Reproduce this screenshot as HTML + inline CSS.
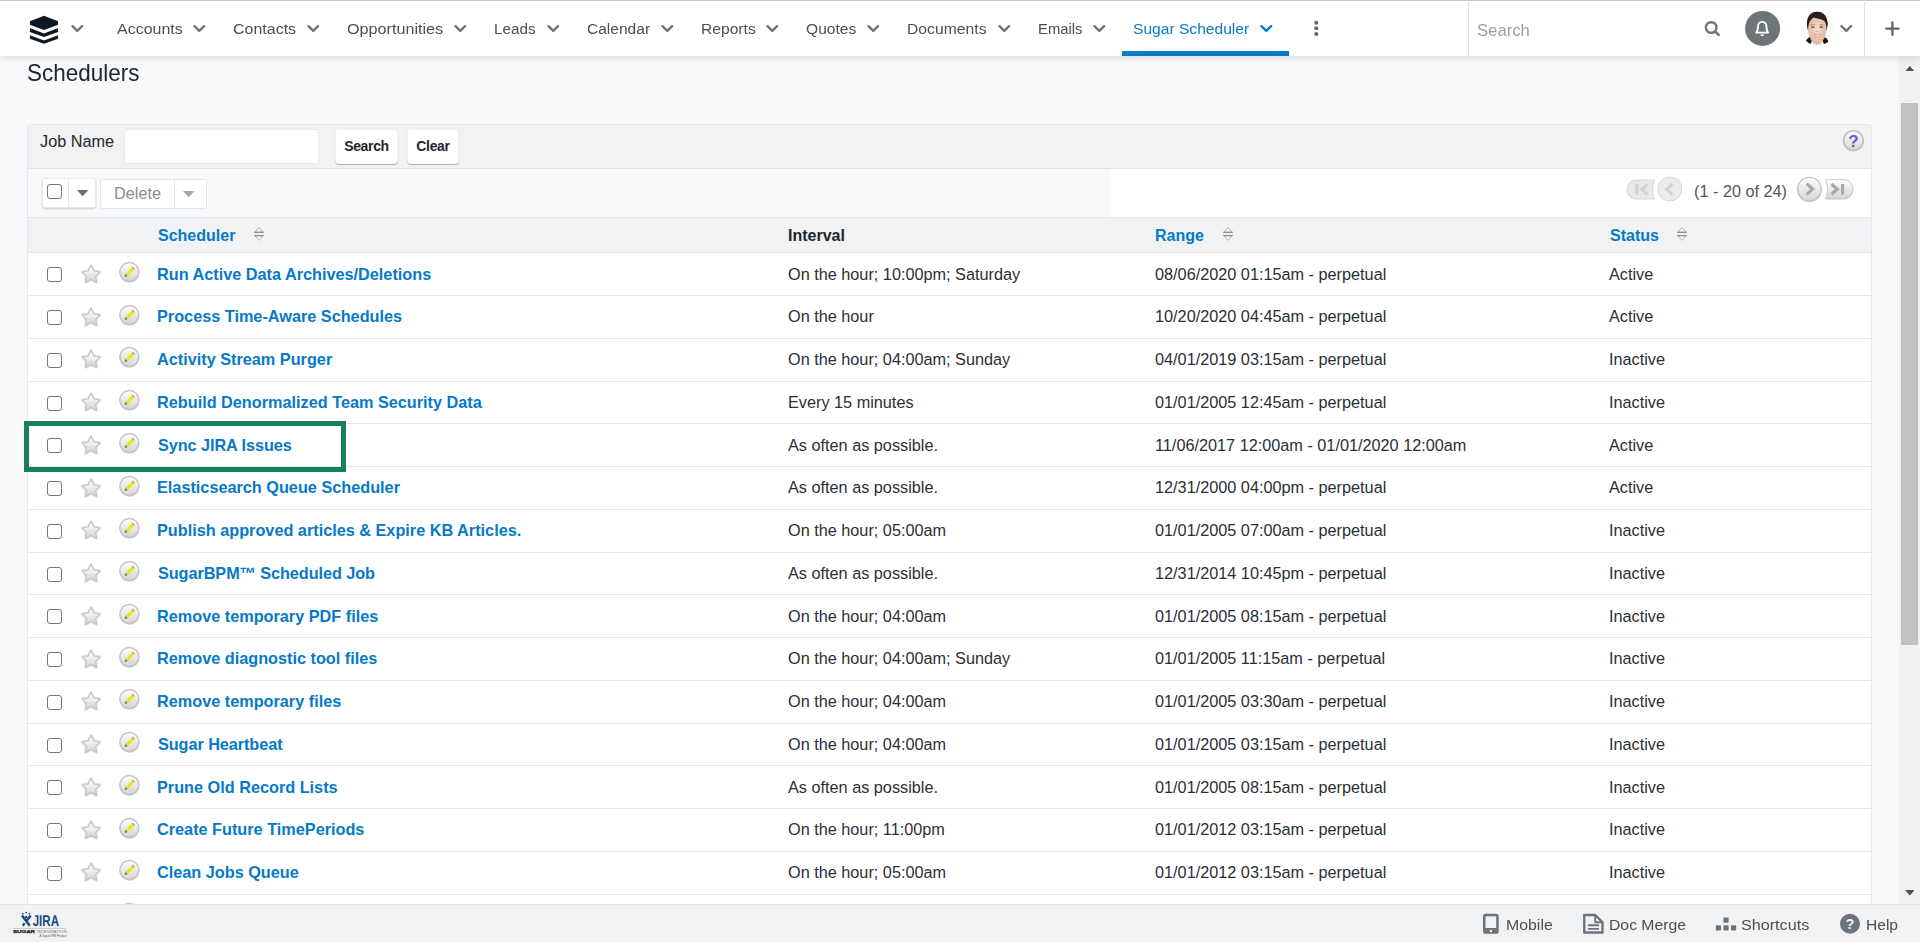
<!DOCTYPE html>
<html lang="en"><head><meta charset="utf-8"><title>Schedulers</title>
<style>
*{box-sizing:border-box}
html,body{margin:0;padding:0}
body{width:1920px;height:942px;overflow:hidden;position:relative;background:#f8f9fb;font-family:"Liberation Sans",sans-serif;color:#2b2f34;font-size:16.25px}
svg{display:block}
.abs{position:absolute}
/* ---- navbar ---- */
#nav{position:absolute;left:0;top:0;width:1920px;height:56px;background:#fff;box-shadow:0 2px 8px rgba(40,50,60,.16)}
#navtop{position:absolute;left:0;top:0;width:1920px;height:1px;background:#c8c8c8}
#nav .it{position:absolute;top:20px;font-size:15.5px;line-height:18px;color:#4a4f55;white-space:nowrap;transform-origin:0 50%}
#nav .chev{position:absolute;top:24.1px;width:14px;height:10px}
#nav .act{color:#0679c8}
#underline{position:absolute;left:1122px;top:51px;width:167px;height:5px;background:#0679c8}
/* ---- title ---- */
#title{position:absolute;left:27px;top:59px;font-size:24px;line-height:28px;color:#22262b;white-space:nowrap;transform:scaleX(.936);transform-origin:0 50%}
/* ---- panel ---- */
#panel{position:absolute;left:27px;top:124px;width:1845px;height:830px;background:#fff;border:1px solid #e4e8ec;border-radius:3px 3px 0 0}
#searchbar{position:absolute;left:28px;top:125px;width:1843px;height:43px;background:#f1f2f4}
#toolbar{position:absolute;left:28px;top:169px;width:1082.500px;height:48px;background:#f8f9fb}
.hline{position:absolute;left:28px;width:1843px;height:1px;background:#dfe5e9}
#thead{position:absolute;left:28px;top:218px;width:1843px;height:34px;background:#f1f2f4}
.th{position:absolute;top:226px;font-weight:bold;font-size:16px;line-height:19px;color:#0679c8;white-space:nowrap}
.sorter{position:absolute;top:227.400px;width:10px;height:14px}
/* rows */
.row{position:absolute;left:28px;width:1843px;border-bottom:0;background:#fff;box-shadow:0 1px 0 #e1e7eb}
.row span,.row a{position:absolute;top:12px;line-height:19px;white-space:nowrap;font-size:16.25px}
.row .cb{left:19px;top:14px;width:15px;height:15px;border:1.5px solid #767676;border-radius:3px;background:#fff}
.row .star{position:absolute;left:52px;top:10px;width:22px;height:22px}
.row .edit{position:absolute;left:89px;top:7px;width:24px;height:24px}
.row .nm{font-weight:bold;color:#0679c8}
.row .iv{left:760px}
.row .rg{left:1127px}
.row .st{left:1581px}
#hl{position:absolute;left:24px;top:421px;width:322px;height:51px;border:5px solid #177f5b}
/* footer */
#foot{position:absolute;left:0;top:904px;width:1920px;height:38px;background:#f1f2f4}
#footline{position:absolute;left:0;top:0;width:1920px;height:1px;background:#dfe5e9}
#foot .ft{position:absolute;top:12px;font-size:15.500px;line-height:18px;color:#4a4f55;white-space:nowrap;transform-origin:0 50%}
/* scrollbar */
#sb{position:absolute;left:1899px;top:56px;width:21px;height:848px;background:#f1f1f1}
#sbthumb{position:absolute;left:1901px;top:103px;width:17px;height:542px;background:#c1c1c1}

</style></head>
<body>
<svg width="0" height="0" style="position:absolute">
<defs>
<linearGradient id="g-star" x1="0" y1="0" x2="0" y2="1"><stop offset="0" stop-color="#ffffff"/><stop offset=".35" stop-color="#f4f4f4"/><stop offset="1" stop-color="#d0d0d0"/></linearGradient>
<linearGradient id="g-btn" x1="0" y1="0" x2="0" y2="1"><stop offset="0" stop-color="#ffffff"/><stop offset="1" stop-color="#d4d4d4"/></linearGradient>
<filter id="f-sh2" x="-20%" y="-20%" width="140%" height="150%"><feGaussianBlur stdDeviation="0.7"/></filter>
<filter id="f-sh" x="-20%" y="-20%" width="140%" height="150%"><feGaussianBlur stdDeviation="0.5"/></filter>
<g id="i-star">
<path d="M11.10 2.60L13.92 7.92L19.85 8.96L15.67 13.28L16.51 19.24L11.10 16.60L5.69 19.24L6.53 13.28L2.35 8.96L8.28 7.92Z" fill="#c9c9c9" stroke="#c6c6c6" stroke-width="3" stroke-linejoin="round" opacity=".5" filter="url(#f-sh2)"/>
<path d="M11.10 2.60L13.92 7.92L19.85 8.96L15.67 13.28L16.51 19.24L11.10 16.60L5.69 19.24L6.53 13.28L2.35 8.96L8.28 7.92Z" fill="url(#g-star)" stroke="#c2c2c2" stroke-width="1.100" stroke-linejoin="round"/>
</g>
<g id="i-edit">
<circle cx="12.400" cy="12.600" r="10.100" fill="#adadad" opacity=".7" filter="url(#f-sh2)"/>
<circle cx="12.400" cy="11.900" r="9.400" fill="url(#g-btn)" stroke="#c6c6c6" stroke-width="1.500"/>
<path transform="translate(12.500 12) scale(.88) translate(-12.500 -12)" d="M7.900 14.100l7.300-7.300 2.600 2.600-7.300 7.300z" fill="#ece81c"/>
<path transform="translate(12.500 12) scale(.88) translate(-12.500 -12)" d="M7.900 14.100l2.600 2.600-3.600 1z" fill="#77776a"/>
<path transform="translate(12.500 12) scale(.88) translate(-12.500 -12)" d="M15.200 6.800l.8-.8 2.600 2.600-.8.800z" fill="#8f8f74"/>
</g>
<g id="i-sort">
<path d="M5 .6L9.200 5.200H.8z" fill="#f5f5f5" stroke="#adadad" stroke-width="1" stroke-linejoin="round"/>
<path d="M5 13.400L9.200 8.700H.8z" fill="#f5f5f5" stroke="#b4b4b4" stroke-width="1" stroke-linejoin="round"/>
<path d="M.3 5.300H9.700M.3 8.600H9.700" stroke="#8e8e8e" stroke-width="1.300"/>
</g>
<path id="i-chev" d="M2.500 2.200L7.300 6.900L12.100 2.200" fill="none" stroke-width="2.400" stroke-linecap="round" stroke-linejoin="round"/>
</defs>
</svg>
<div id="title">Schedulers</div>
<div id="panel"></div>
<div id="searchbar"></div>
<div class="hline" style="top:168px"></div>
<div id="toolbar"></div>
<div class="hline" style="top:217px"></div>
<div id="thead"></div>
<div class="hline" style="top:252px"></div>

<!-- search form -->
<div class="abs" style="left:40px;top:132px;font-size:16.25px;line-height:19px;color:#22262b">Job Name</div>
<div class="abs" style="left:124px;top:129px;width:195px;height:35px;background:#fff;border:1px solid #e6eaee;border-radius:3px"></div>
<div class="abs btn" style="left:335px;top:129px;width:63px;height:35px;background:#fff;border:1px solid rgba(120,130,140,.10);border-radius:4px;box-shadow:0 1px 1px rgba(0,0,0,.26);font-weight:bold;font-size:14px;letter-spacing:-.35px;line-height:33px;text-align:center;color:#22262b">Search</div>
<div class="abs btn" style="left:407px;top:129px;width:52px;height:35px;background:#fff;border:1px solid rgba(120,130,140,.10);border-radius:4px;box-shadow:0 1px 1px rgba(0,0,0,.26);font-weight:bold;font-size:14px;letter-spacing:-.35px;line-height:33px;text-align:center;color:#22262b">Clear</div>
<!-- help icon -->
<svg class="abs" style="left:1841px;top:128px" width="25" height="26" viewBox="0 0 25 26">
<circle cx="12.450" cy="13" r="10.600" fill="#b0b0b0" opacity=".55" filter="url(#f-sh2)"/>
<circle cx="12.450" cy="12.600" r="9.800" fill="url(#g-btn)" stroke="#c0c0c0" stroke-width="1.600"/>
<text x="12.500" y="19" text-anchor="middle" font-family="Liberation Sans, sans-serif" font-weight="bold" font-size="17" fill="#5a5fe2">?</text>
</svg>

<!-- toolbar -->
<div class="abs" style="left:41.600px;top:177.600px;width:54.200px;height:30px;background:#fff;border:1px solid #e6eaee;border-radius:3px;box-shadow:0 1px 2px rgba(0,0,0,.18)"></div>
<div class="abs" style="left:68px;top:179px;width:1px;height:28px;background:#e3e7eb"></div>
<div class="abs" style="left:47px;top:184px;width:15px;height:15px;border:1.500px solid #767676;border-radius:3px;background:#fff"></div>
<svg class="abs" style="left:77.400px;top:190.300px" width="11.400" height="6.300" viewBox="0 0 10.500 5.800"><path d="M0 0h10.500L5.250 5.800z" fill="#6b6b6b"/></svg>
<div class="abs" style="left:100px;top:179px;width:107px;height:29.600px;background:#fff;border:1px solid #e3e7eb;border-radius:2px"></div>
<div class="abs" style="left:174px;top:180px;width:1px;height:28px;background:#e3e7eb"></div>
<div class="abs" style="left:114px;top:184px;font-size:16.25px;line-height:19px;color:#878d93">Delete</div>
<svg class="abs" style="left:183.150px;top:191.250px" width="11.400" height="6.300" viewBox="0 0 10.500 5.800"><path d="M0 0h10.500L5.250 5.800z" fill="#a8a8a8"/></svg>

<!-- pagination -->
<svg class="abs" style="left:1624px;top:174px" width="236" height="32" viewBox="0 0 236 32">
<g stroke="#d6d6d6" stroke-width="1">
<path d="M12 6h18.500c-2.600 5.500-2.600 13.500 0 19H12c-5 0-9-4-9-9.500s4-9.500 9-9.500z" fill="#e9e9e9"/>
<circle cx="45.800" cy="15" r="12" fill="#ececec"/>
<circle cx="185.500" cy="16" r="12.200" fill="#b0b0b0" stroke="none" opacity=".6" filter="url(#f-sh2)"/>
<path d="M201.500 6.500h18.500c5 0 9 4 9 9.500s-4 9.500-9 9.500h-18.500c2.600-5.500 2.600-13.500 0-19z" fill="#b4b4b4" stroke="none" opacity=".6" filter="url(#f-sh2)"/>
<circle cx="185.500" cy="15.100" r="11.700" fill="url(#g-btn)" stroke="#c4c4c4" stroke-width="1.400"/>
<path d="M201.500 5.700h18.500c5 0 9 4 9 9.500s-4 9.500-9 9.500h-18.500c2.600-5.500 2.600-13.500 0-19z" fill="url(#g-btn)" stroke="#cacaca"/>
</g>
<g fill="none" stroke="#d2d2d2" stroke-width="3" stroke-linecap="butt">
<path d="M12.800 10.300v10.400M23.500 10.300l-5.800 5.200 5.800 5.200"/>
<path d="M48.500 9.800l-5.800 5.400 5.800 5.400"/>
</g>
<g fill="none" stroke="#a8a8a8" stroke-width="3.100">
<path d="M182.700 9.700l5.900 5.400-5.900 5.400"/>
<path d="M207.500 10.100l5.800 5.100-5.800 5.100M218.600 10v10.400"/>
</g>
</svg>
<div class="abs" style="left:1694px;top:182px;font-size:16.25px;line-height:19px;color:#4f555c">(1 - 20 of 24)</div>

<!-- table header -->
<div class="th" style="left:158px">Scheduler</div>
<svg class="sorter" style="left:254px" viewBox="0 0 10 14"><use href="#i-sort"/></svg>
<div class="th" style="left:788px;color:#22262b">Interval</div>
<div class="th" style="left:1155px">Range</div>
<svg class="sorter" style="left:1223px" viewBox="0 0 10 14"><use href="#i-sort"/></svg>
<div class="th" style="left:1610px">Status</div>
<svg class="sorter" style="left:1677px" viewBox="0 0 10 14"><use href="#i-sort"/></svg>
<div id="rows">
<div class="row" style="top:253px;height:42px"><span class="cb"></span><svg class="star" style="top:10px" viewBox="0 0 22 22"><use href="#i-star"/></svg><svg class="edit" style="top:7px" viewBox="0 0 24 24"><use href="#i-edit"/></svg><a class="nm" style="left:129px;top:12px">Run Active Data Archives/Deletions</a><span class="iv" style="top:12px">On the hour; 10:00pm; Saturday</span><span class="rg" style="top:12px">08/06/2020 01:15am - perpetual</span><span class="st" style="top:12px">Active</span></div>
<div class="row" style="top:296px;height:42px"><span class="cb"></span><svg class="star" style="top:10px" viewBox="0 0 22 22"><use href="#i-star"/></svg><svg class="edit" style="top:7px" viewBox="0 0 24 24"><use href="#i-edit"/></svg><a class="nm" style="left:129px;top:11px">Process Time-Aware Schedules</a><span class="iv" style="top:11px">On the hour</span><span class="rg" style="top:11px">10/20/2020 04:45am - perpetual</span><span class="st" style="top:11px">Active</span></div>
<div class="row" style="top:339px;height:42px"><span class="cb"></span><svg class="star" style="top:9px" viewBox="0 0 22 22"><use href="#i-star"/></svg><svg class="edit" style="top:6px" viewBox="0 0 24 24"><use href="#i-edit"/></svg><a class="nm" style="left:129px;top:11px">Activity Stream Purger</a><span class="iv" style="top:11px">On the hour; 04:00am; Sunday</span><span class="rg" style="top:11px">04/01/2019 03:15am - perpetual</span><span class="st" style="top:11px">Inactive</span></div>
<div class="row" style="top:382px;height:41px"><span class="cb"></span><svg class="star" style="top:9px" viewBox="0 0 22 22"><use href="#i-star"/></svg><svg class="edit" style="top:6px" viewBox="0 0 24 24"><use href="#i-edit"/></svg><a class="nm" style="left:129px;top:11px">Rebuild Denormalized Team Security Data</a><span class="iv" style="top:11px">Every 15 minutes</span><span class="rg" style="top:11px">01/01/2005 12:45am - perpetual</span><span class="st" style="top:11px">Inactive</span></div>
<div class="row" style="top:424px;height:42px"><span class="cb"></span><svg class="star" style="top:10px" viewBox="0 0 22 22"><use href="#i-star"/></svg><svg class="edit" style="top:7px" viewBox="0 0 24 24"><use href="#i-edit"/></svg><a class="nm" style="left:130px;top:12px;letter-spacing:-.07px">Sync JIRA Issues</a><span class="iv" style="top:12px">As often as possible.</span><span class="rg" style="top:12px">11/06/2017 12:00am - 01/01/2020 12:00am</span><span class="st" style="top:12px">Active</span></div>
<div class="row" style="top:467px;height:42px"><span class="cb"></span><svg class="star" style="top:10px" viewBox="0 0 22 22"><use href="#i-star"/></svg><svg class="edit" style="top:7px" viewBox="0 0 24 24"><use href="#i-edit"/></svg><a class="nm" style="left:129px;top:11px">Elasticsearch Queue Scheduler</a><span class="iv" style="top:11px">As often as possible.</span><span class="rg" style="top:11px">12/31/2000 04:00pm - perpetual</span><span class="st" style="top:11px">Active</span></div>
<div class="row" style="top:510px;height:42px"><span class="cb"></span><svg class="star" style="top:9px" viewBox="0 0 22 22"><use href="#i-star"/></svg><svg class="edit" style="top:6px" viewBox="0 0 24 24"><use href="#i-edit"/></svg><a class="nm" style="left:129px;top:11px">Publish approved articles &amp; Expire KB Articles.</a><span class="iv" style="top:11px">On the hour; 05:00am</span><span class="rg" style="top:11px">01/01/2005 07:00am - perpetual</span><span class="st" style="top:11px">Inactive</span></div>
<div class="row" style="top:553px;height:41px"><span class="cb"></span><svg class="star" style="top:9px" viewBox="0 0 22 22"><use href="#i-star"/></svg><svg class="edit" style="top:6px" viewBox="0 0 24 24"><use href="#i-edit"/></svg><a class="nm" style="left:130px;top:11px;letter-spacing:-.07px">SugarBPM™ Scheduled Job</a><span class="iv" style="top:11px">As often as possible.</span><span class="rg" style="top:11px">12/31/2014 10:45pm - perpetual</span><span class="st" style="top:11px">Inactive</span></div>
<div class="row" style="top:595px;height:42px"><span class="cb"></span><svg class="star" style="top:10px" viewBox="0 0 22 22"><use href="#i-star"/></svg><svg class="edit" style="top:7px" viewBox="0 0 24 24"><use href="#i-edit"/></svg><a class="nm" style="left:129px;top:12px">Remove temporary PDF files</a><span class="iv" style="top:12px">On the hour; 04:00am</span><span class="rg" style="top:12px">01/01/2005 08:15am - perpetual</span><span class="st" style="top:12px">Inactive</span></div>
<div class="row" style="top:638px;height:42px"><span class="cb"></span><svg class="star" style="top:10px" viewBox="0 0 22 22"><use href="#i-star"/></svg><svg class="edit" style="top:7px" viewBox="0 0 24 24"><use href="#i-edit"/></svg><a class="nm" style="left:129px;top:11px">Remove diagnostic tool files</a><span class="iv" style="top:11px">On the hour; 04:00am; Sunday</span><span class="rg" style="top:11px">01/01/2005 11:15am - perpetual</span><span class="st" style="top:11px">Inactive</span></div>
<div class="row" style="top:681px;height:42px"><span class="cb"></span><svg class="star" style="top:9px" viewBox="0 0 22 22"><use href="#i-star"/></svg><svg class="edit" style="top:6px" viewBox="0 0 24 24"><use href="#i-edit"/></svg><a class="nm" style="left:129px;top:11px">Remove temporary files</a><span class="iv" style="top:11px">On the hour; 04:00am</span><span class="rg" style="top:11px">01/01/2005 03:30am - perpetual</span><span class="st" style="top:11px">Inactive</span></div>
<div class="row" style="top:724px;height:41px"><span class="cb"></span><svg class="star" style="top:9px" viewBox="0 0 22 22"><use href="#i-star"/></svg><svg class="edit" style="top:6px" viewBox="0 0 24 24"><use href="#i-edit"/></svg><a class="nm" style="left:130px;top:11px;letter-spacing:-.07px">Sugar Heartbeat</a><span class="iv" style="top:11px">On the hour; 04:00am</span><span class="rg" style="top:11px">01/01/2005 03:15am - perpetual</span><span class="st" style="top:11px">Inactive</span></div>
<div class="row" style="top:766px;height:42px"><span class="cb"></span><svg class="star" style="top:10px" viewBox="0 0 22 22"><use href="#i-star"/></svg><svg class="edit" style="top:7px" viewBox="0 0 24 24"><use href="#i-edit"/></svg><a class="nm" style="left:129px;top:12px">Prune Old Record Lists</a><span class="iv" style="top:12px">As often as possible.</span><span class="rg" style="top:12px">01/01/2005 08:15am - perpetual</span><span class="st" style="top:12px">Inactive</span></div>
<div class="row" style="top:809px;height:42px"><span class="cb"></span><svg class="star" style="top:10px" viewBox="0 0 22 22"><use href="#i-star"/></svg><svg class="edit" style="top:7px" viewBox="0 0 24 24"><use href="#i-edit"/></svg><a class="nm" style="left:129px;top:11px">Create Future TimePeriods</a><span class="iv" style="top:11px">On the hour; 11:00pm</span><span class="rg" style="top:11px">01/01/2012 03:15am - perpetual</span><span class="st" style="top:11px">Inactive</span></div>
<div class="row" style="top:852px;height:42px"><span class="cb"></span><svg class="star" style="top:9px" viewBox="0 0 22 22"><use href="#i-star"/></svg><svg class="edit" style="top:6px" viewBox="0 0 24 24"><use href="#i-edit"/></svg><a class="nm" style="left:129px;top:11px">Clean Jobs Queue</a><span class="iv" style="top:11px">On the hour; 05:00am</span><span class="rg" style="top:11px">01/01/2012 03:15am - perpetual</span><span class="st" style="top:11px">Inactive</span></div>
<div class="row" style="top:895px;height:42px"><span class="cb"></span><svg class="star" style="top:9px" viewBox="0 0 22 22"><use href="#i-star"/></svg><svg class="edit" style="top:6px" viewBox="0 0 24 24"><use href="#i-edit"/></svg><a class="nm" style="left:129px;top:11px">Send Campaign Emails</a><span class="iv" style="top:11px">On the hour; 02:00am</span><span class="rg" style="top:11px">01/01/2005 08:15am - perpetual</span><span class="st" style="top:11px">Inactive</span></div>
</div>
<div id="hl"></div>
<div id="foot">
<div id="footline"></div>
<svg class="abs" style="left:12px;top:6px" width="58" height="29" viewBox="12 910 58 29">
<g fill="#20497c">
<circle cx="26.200" cy="912.600" r=".95"/><circle cx="22.900" cy="913.600" r=".9"/><circle cx="29.400" cy="913.600" r=".9"/><circle cx="26.200" cy="917" r="1.200"/>
<path d="M22 915.500L26.800 921.700L29.600 925.800M30.700 915.500L25.700 922" stroke="#20497c" stroke-width="2.500" fill="none"/>
<path d="M24.600 923.200L22.800 925.800" stroke="#20497c" stroke-width="2.300" fill="none"/>
</g>
<text transform="translate(32.700 926.100) scale(.745 1) skewX(.3)" font-family="Liberation Sans, sans-serif" font-weight="bold" font-size="15.500" fill="#20497c">JIRA</text>
<rect x="13" y="928" width="53.700" height=".5" fill="#a8a8a8"/>
<text x="13" y="932.800" font-family="Liberation Sans, sans-serif" font-weight="bold" font-size="3.800" fill="#1c1c1c" stroke="#1c1c1c" stroke-width=".25" textLength="21.900" lengthAdjust="spacingAndGlyphs">SUGAR</text>
<text x="37" y="932.800" font-family="Liberation Sans, sans-serif" font-size="3.800" fill="#777" textLength="29.700" lengthAdjust="spacingAndGlyphs">INTEGRATION</text>
<text x="39.600" y="936.600" font-family="Liberation Sans, sans-serif" font-style="italic" font-size="3" fill="#555" textLength="27" lengthAdjust="spacingAndGlyphs">A SugarCRM Product</text>
</svg>

<svg class="abs" style="left:1482px;top:9px" width="18" height="22" viewBox="1482 913 18 22"><rect x="1483" y="913.800" width="15.700" height="20" rx="2.600" fill="#6c757d"/><rect x="1485.500" y="916.300" width="10.700" height="11.700" fill="#f1f2f4"/><circle cx="1490.850" cy="930.900" r="1.250" fill="#f1f2f4"/></svg>
<span class="ft" style="left:1506.200px;transform:scaleX(1.0236)">Mobile</span>
<svg class="abs" style="left:1582px;top:9px" width="23" height="22" viewBox="1582 913 23 22"><path d="M1584.250 915h11l7.250 7.250v10.300h-18.250z" fill="none" stroke="#6c757d" stroke-width="2.400" stroke-linejoin="round"/><path d="M1595.250 915v7.250h7.250" fill="none" stroke="#6c757d" stroke-width="1.800" stroke-linejoin="round"/><path d="M1588 925.200h11M1588 928.900h11" stroke="#6c757d" stroke-width="1.900"/></svg>
<span class="ft" style="left:1608.700px;transform:scaleX(1.0157)">Doc Merge</span>
<svg class="abs" style="left:1715px;top:13px" width="22" height="14" viewBox="1715 917 22 14"><rect x="1723.400" y="917.500" width="5.200" height="5.200" rx=".8" fill="#6c757d"/><rect x="1715.800" y="925.300" width="5.200" height="5.200" rx=".8" fill="#6c757d"/><rect x="1723.400" y="925.300" width="5.200" height="5.200" rx=".8" fill="#6c757d"/><rect x="1731" y="925.300" width="5.200" height="5.200" rx=".8" fill="#6c757d"/></svg>
<span class="ft" style="left:1741.200px;transform:scaleX(1.0422)">Shortcuts</span>
<svg class="abs" style="left:1839px;top:9px" width="22" height="22" viewBox="1839 913 22 22"><circle cx="1850" cy="923.750" r="10" fill="#6c757d"/><text x="1850" y="929" text-anchor="middle" font-family="Liberation Sans, sans-serif" font-weight="bold" font-size="14.500" fill="#f1f2f4">?</text></svg>
<span class="ft" style="left:1865.500px;transform:scaleX(1.0034)">Help</span>
</div>
<div id="sb"></div><div id="sbthumb"></div>
<svg class="abs" style="left:1904.800px;top:65.500px" width="9.600" height="5.400" viewBox="0 0 9.600 5.400"><path d="M0 5.400h9.600L4.800 0z" fill="#505050"/></svg>
<svg class="abs" style="left:1904.800px;top:890.300px" width="9.600" height="5.400" viewBox="0 0 9.600 5.400"><path d="M0 0h9.600L4.800 5.400z" fill="#505050"/></svg>
<div id="nav">
<div id="navtop"></div>
<svg class="abs" style="left:28px;top:14px" width="32" height="31" viewBox="28 14 32 31">
<path d="M44 15.700L58.100 21.350V24.800L44 30.100L29.900 24.800V21.350Z" fill="#0f1820"/>
<path d="M29.900 28.100L44 33.500L58.100 28.100V31.900L44 36.900L29.900 31.900Z" fill="#0f1820"/>
<path d="M29.900 35.200L44 40.400L58.100 35.200V38.850L44 43.800L29.900 38.850Z" fill="#0f1820"/>
</svg>
<svg class="chev" style="left:70.400px" viewBox="0 0 14 10"><use href="#i-chev" stroke="#6c757d"/></svg>

<span class="it" style="left:116.7px;transform:scaleX(1.032)">Accounts</span><svg class="chev" style="left:192.2px" viewBox="0 0 14 10"><use href="#i-chev" stroke="#6c757d"/></svg>
<span class="it" style="left:233.3px;transform:scaleX(1.0315)">Contacts</span><svg class="chev" style="left:306.3px" viewBox="0 0 14 10"><use href="#i-chev" stroke="#6c757d"/></svg>
<span class="it" style="left:347.1px;transform:scaleX(1.0433)">Opportunities</span><svg class="chev" style="left:453.3px" viewBox="0 0 14 10"><use href="#i-chev" stroke="#6c757d"/></svg>
<span class="it" style="left:494.4px;transform:scaleX(0.9826)">Leads</span><svg class="chev" style="left:545.9px" viewBox="0 0 14 10"><use href="#i-chev" stroke="#6c757d"/></svg>
<span class="it" style="left:586.6px;transform:scaleX(1.003)">Calendar</span><svg class="chev" style="left:659.6px" viewBox="0 0 14 10"><use href="#i-chev" stroke="#6c757d"/></svg>
<span class="it" style="left:700.8px;transform:scaleX(1.0077)">Reports</span><svg class="chev" style="left:765.4px" viewBox="0 0 14 10"><use href="#i-chev" stroke="#6c757d"/></svg>
<span class="it" style="left:806.1px;transform:scaleX(1.0063)">Quotes</span><svg class="chev" style="left:866.0px" viewBox="0 0 14 10"><use href="#i-chev" stroke="#6c757d"/></svg>
<span class="it" style="left:907.1px;transform:scaleX(1.014)">Documents</span><svg class="chev" style="left:996.9px" viewBox="0 0 14 10"><use href="#i-chev" stroke="#6c757d"/></svg>
<span class="it" style="left:1038.0px;transform:scaleX(0.9567)">Emails</span><svg class="chev" style="left:1092.0px" viewBox="0 0 14 10"><use href="#i-chev" stroke="#6c757d"/></svg>
<span class="it act" style="left:1133.2px;transform:scaleX(1.0063)">Sugar Scheduler</span><svg class="chev" style="left:1259.0px" viewBox="0 0 14 10"><use href="#i-chev" stroke="#0679c8"/></svg>
<div id="underline"></div>
<svg class="abs" style="left:1313px;top:19px" width="7" height="19" viewBox="1313 19 7 19"><circle cx="1316.300" cy="22.800" r="2" fill="#5f666b"/><circle cx="1316.300" cy="28.350" r="2" fill="#5f666b"/><circle cx="1316.300" cy="34.100" r="2" fill="#5f666b"/></svg>

<div class="abs" style="left:1468px;top:0;width:1px;height:56px;background:#dfe4e8"></div>
<span class="it" style="left:1477px;top:21px;font-size:17px;line-height:20px;color:#9aa0a6;transform:scaleX(.98)">Search</span>
<svg class="abs" style="left:1703px;top:19px" width="18" height="18" viewBox="1703 19 18 18"><circle cx="1711.200" cy="27.500" r="5.300" fill="none" stroke="#6c757d" stroke-width="2.500"/><path d="M1715.200 31.500l3.400 3.400" stroke="#6c757d" stroke-width="2.600" stroke-linecap="round"/></svg>
<svg class="abs" style="left:1744px;top:10px" width="38" height="38" viewBox="1744 10 38 38"><circle cx="1762.600" cy="28.450" r="17.500" fill="#6e7579"/>
<path d="M1762.200 21.900c-3 0-4.300 2.300-4.300 5.300 0 2.900-.6 4.400-1.600 5.400h11.800c-1-1-1.600-2.500-1.600-5.400 0-3-1.300-5.300-4.300-5.300z" fill="none" stroke="#fff" stroke-width="1.900" stroke-linejoin="round"/><path d="M1760.300 34.600h3.800a1.900 1.500 0 0 1-3.800 0z" fill="#fff"/></svg>
<!-- avatar -->
<svg class="abs" style="left:1799px;top:9px" width="38" height="40" viewBox="0 0 38 40">
<defs><clipPath id="avc"><circle cx="18.600" cy="19.400" r="17"/></clipPath>
<radialGradient id="avskin" cx=".5" cy=".45" r=".6"><stop offset="0" stop-color="#f6dccb"/><stop offset="1" stop-color="#e0b096"/></radialGradient></defs>
<circle cx="18.600" cy="19.400" r="17" fill="#fbfbfb"/>
<g clip-path="url(#avc)">
<path d="M8 16.500c-.8-8.500 3.700-14 10.200-14s11 5.500 10.300 14c-.1 2-.5 3.500-1 4.500h-18.500c-.5-1-.9-2.500-1-4.500z" fill="#2a1f1c"/>
<path d="M12.500 28.500h11.500l4 5-4.500 4h-10l-4.500-4z" fill="#f4f1ef"/>
<path d="M6.300 33.800c.8-2.700 2.500-5 5-6.300l2.300 2.300-2.600 6.700z" fill="#17161a"/>
<path d="M30.300 34.300c-.8-2.700-2.300-4.800-4.800-6.100l-2.300 2.300 2.600 6.700z" fill="#17161a"/>
<path d="M9.200 17c.2-6 3.600-9.800 8.900-9.800 5.400 0 8.900 3.800 9.400 9.800.4 5-.6 9.500-2.600 13-1.700 3.200-4.300 5.700-6.700 5.700s-5-2.500-6.700-5.700c-2-3.500-2.700-8-2.300-13z" fill="url(#avskin)"/>
<path d="M9.200 17.500c.6-4.500 2.600-7.500 5.600-9 3.200 1.500 8.500 1 11.400 4.500.8 1.500 1.200 3 1.300 4.500l1.200-1.500c-.2-7.500-4.400-12.500-10.500-12.500s-10.300 5.500-10 13z" fill="#2a1f1c"/>
<ellipse cx="13.900" cy="18.200" rx="1.700" ry=".9" fill="#66646a"/><ellipse cx="22.300" cy="18.200" rx="1.700" ry=".9" fill="#66646a"/>
<path d="M11.700 16.300c1.300-.8 3-.8 4.200-.2M20.300 16.100c1.300-.6 3-.6 4.200.2" stroke="#7a5a4c" stroke-width=".6" fill="none"/>
<path d="M14.300 25.200c2.500.8 5.400.8 7.900 0-.9 2.900-6.800 2.900-7.900 0z" fill="#fff" stroke="#d98e93" stroke-width=".8" stroke-linejoin="round"/>
<path d="M17 22.400c.7.500 1.800.5 2.500 0" stroke="#d4a28a" stroke-width=".6" fill="none"/>
</g>
</svg>
<svg class="chev" style="left:1839px;top:24.200px" viewBox="0 0 14 10"><use href="#i-chev" stroke="#6c757d"/></svg>
<div class="abs" style="left:1864px;top:0;width:1px;height:56px;background:#dfe4e8"></div>
<svg class="abs" style="left:1884px;top:20px" width="17" height="17" viewBox="1884 20 17 17"><path d="M1892.400 22.300v12.500M1886.100 28.550h12.600" stroke="#5f666b" stroke-width="2.300" stroke-linecap="round"/></svg>
</div>
</body></html>
